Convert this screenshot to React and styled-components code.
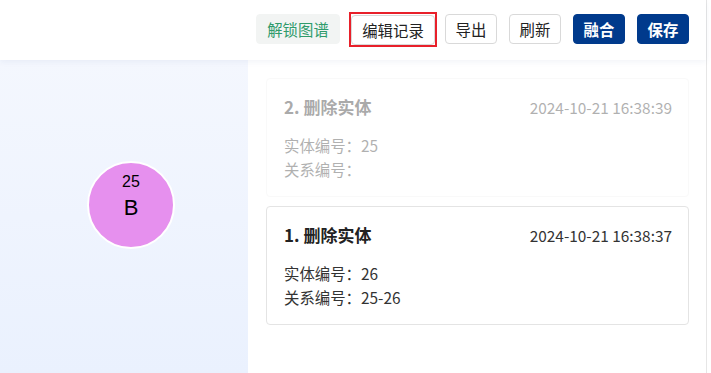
import styled, { createGlobalStyle } from 'styled-components'

const GlobalStyle = createGlobalStyle`
  html, body {
    margin: 0;
    padding: 0;
    background: #fff;
    overflow: hidden;
  }
  * {
    box-sizing: border-box;
  }
`

const cjk = `"Noto Sans CJK SC", "Noto Sans", sans-serif`

const Page = styled.div`
  width: 707px;
  height: 373px;
  display: flex;
  flex-direction: column;
  border-right: 1px solid #e6e6e6;
  font-family: ${cjk};
`

const Toolbar = styled.header`
  height: 60px;
  flex-shrink: 0;
  display: flex;
  align-items: center;
  justify-content: flex-end;
  gap: 12px;
  padding: 0 17px 2px 0;
  background: #fff;
  box-shadow: 0 2px 6px rgba(30, 60, 140, 0.06);
  position: relative;
  z-index: 2;
`

const Button = styled.button`
  height: 30px;
  width: ${(p) => (p.$wide ? '84px' : '52px')};
  padding: 0;
  font-family: ${cjk};
  font-size: 15.4px;
  border-radius: 4px;
  cursor: pointer;
  border: 1px solid
    ${(p) => (p.$variant === 'primary' ? '#003a8c' : p.$variant === 'soft' ? '#f2f4f3' : '#d9d9d9')};
  background: ${(p) =>
    p.$variant === 'primary' ? '#003a8c' : p.$variant === 'soft' ? '#f2f4f3' : '#fff'};
  color: ${(p) =>
    p.$variant === 'primary' ? '#fff' : p.$variant === 'soft' ? '#2f9b6b' : '#222'};
  font-weight: ${(p) => (p.$variant === 'primary' ? 700 : 400)};
`

const Highlight = styled.div`
  display: flex;
  padding: 1px 0 0;
  margin: 0 -4px 0 -3px;
  border: 2px solid #e8202a;
`

const Body = styled.main`
  flex: 1;
  display: flex;
  min-height: 0;
`

const Canvas = styled.section`
  width: 248px;
  position: relative;
  background: linear-gradient(180deg, #f4f7fe 0%, #eaf1fe 100%);
`

const Node = styled.div`
  position: absolute;
  left: ${(p) => p.$x}px;
  top: ${(p) => p.$y}px;
  width: 88px;
  height: 88px;
  border-radius: 50%;
  border: 2px solid #fff;
  background: ${(p) => p.$color};
  display: flex;
  flex-direction: column;
  align-items: center;
  padding-top: 9px;
  font-family: "Liberation Sans", Arial, sans-serif;
  color: #000;
`

const NodeId = styled.span`
  font-size: 16px;
  line-height: 20px;
`

const NodeLabel = styled.span`
  margin-top: 3px;
  font-size: 22px;
  line-height: 26px;
`

const History = styled.section`
  flex: 1;
  display: flex;
  flex-direction: column;
  gap: 9px;
  padding: 18px 17px 0 18px;
  background: #fff;
`

const Card = styled.article`
  border: 1px solid #e4e4e4;
  border-radius: 4px;
  padding: 16px 16px 15px 17px;
  opacity: ${(p) => (p.$faded ? 0.38 : 1)};
  border-color: ${(p) => (p.$faded ? '#f0f0f0' : '#e4e4e4')};
`

const CardHead = styled.div`
  display: flex;
  justify-content: space-between;
  align-items: center;
  margin-bottom: 14px;
  line-height: 24px;
`

const Title = styled.h3`
  margin: 0;
  font-size: 17px;
  font-weight: 700;
  color: #222;
`

const Time = styled.span`
  font-size: 15.4px;
  color: #333;
`

const Field = styled.div`
  font-size: 15.4px;
  line-height: 24px;
  color: #333;
`

const records = [
  { n: 2, action: '删除实体', time: '2024-10-21 16:38:39', entity: '25', relation: '', faded: true },
  { n: 1, action: '删除实体', time: '2024-10-21 16:38:37', entity: '26', relation: '25-26' },
]

const App = () => {
  return (
    <>
      <GlobalStyle />
      <Page>
        <Toolbar>
          <Button $variant='soft' $wide>解锁图谱</Button>
          <Highlight>
            <Button $wide>编辑记录</Button>
          </Highlight>
          <Button>导出</Button>
          <Button>刷新</Button>
          <Button $variant='primary'>融合</Button>
          <Button $variant='primary'>保存</Button>
        </Toolbar>
        <Body>
          <Canvas>
            <Node $x={87} $y={101} $color='#e690ee'>
              <NodeId>25</NodeId>
              <NodeLabel>B</NodeLabel>
            </Node>
          </Canvas>
          <History>
            {records.map((r) => (
              <Card key={r.n} $faded={r.faded}>
                <CardHead>
                  <Title>
                    {r.n}. {r.action}
                  </Title>
                  <Time>{r.time}</Time>
                </CardHead>
                <Field>实体编号：{r.entity}</Field>
                <Field>关系编号：{r.relation}</Field>
              </Card>
            ))}
          </History>
        </Body>
      </Page>
    </>
  )
}

export default App
